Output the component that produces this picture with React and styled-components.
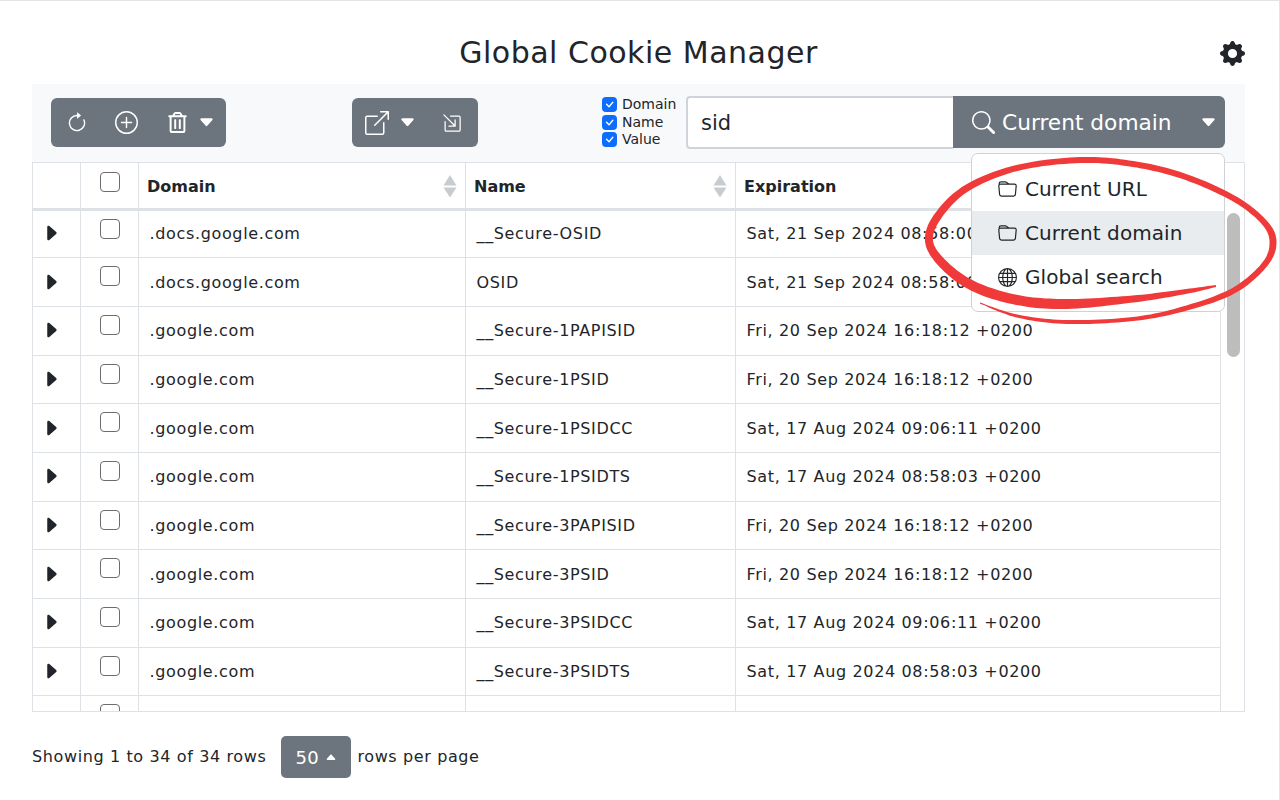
import React from "react";
import styled, { createGlobalStyle } from "styled-components";
import { BsArrowClockwise, BsPlusCircle, BsBoxArrowUpRight, BsBoxArrowInDownRight, BsGearFill, BsSearch, BsFolder, BsGlobe, BsCaretRightFill, BsCaretDownFill, BsCaretUpFill, BsCheck } from "react-icons/bs";
import { FaRegTrashAlt } from "react-icons/fa";

const Global = createGlobalStyle`
  html, body { margin: 0; padding: 0; background: #fff; }
  body { font-family: "DejaVu Sans", sans-serif; color: #212529; font-size: 16px; }
`;
const Page = styled.div`
  width: 1280px; height: 800px; box-sizing: border-box; padding: 0 34px 0 32px; position: relative; overflow: hidden;
  border-top: 1px solid #e4e4e4; border-right: 1px solid #e4e4e4;
`;
const Header = styled.header`
  height: 83px; display: grid; grid-template-columns: 1fr auto 1fr; align-items: center; padding-top: 20px; box-sizing: border-box;
`;
const Title = styled.h1`
  grid-column: 2; margin: 0; font-size: 30px; font-weight: 400; color: #212529; font-family: "DejaVu Sans", sans-serif; letter-spacing: 0.5px;
`;
const Gear = styled.span`
  justify-self: end; display: flex; font-size: 25px; color: #212529; margin-top: 2px;
`;
const Toolbar = styled.div`
  height: 78px; background: #f8f9fa; display: flex; align-items: flex-start; position: relative; box-sizing: border-box; padding-top: 14px; padding-left: 19px;
`;
const BtnGroup = styled.div`
  height: 49px; background: #6c757d; border-radius: 6px; color: #fff; display: flex; align-items: center; width: ${p => p.$w}px; margin-right: ${p => p.$mr}px; padding-left: ${p => p.$pl}px; box-sizing: border-box;
`;
const ToolIcon = styled.span`
  display: flex; font-size: ${p => p.$s || 22}px; width: ${p => p.$w}px;
`;
const Checks = styled.div`
  display: flex; flex-direction: column; width: 84px; margin-top: -2px; font-size: 14px; line-height: 17.6px;
`;
const CheckRow = styled.label`
  display: flex; align-items: center; gap: 5px; color: #212529;
`;
const BlueCheck = styled.span`
  width: 15px; height: 15px; border-radius: 4px; background: #0d6efd; color: #fff; display: flex; align-items: center; justify-content: center; font-size: 15px;
`;
const SearchInput = styled.div`
  width: 267px; height: 53px; margin-top: -2px; box-sizing: border-box; border: 2px solid #ced4da; border-right: 0; background: #fff; border-radius: 4px 0 0 4px; font-size: 21px; display: flex; align-items: center; padding-left: 13px; color: #212529;
`;
const SearchButton = styled.div`
  width: 272px; height: 52px; margin-top: -2px; background: #6c757d; color: #fff; border-radius: 0 6px 6px 0; display: flex; align-items: center; font-size: 21.7px; box-sizing: border-box; padding-left: 19px; gap: 7px; position: relative;
`;
const CaretEnd = styled.span`
  display: flex; font-size: 17px; margin-left: auto; margin-right: 8px;
`;
const Menu = styled.div`
  position: absolute; top: 69px; left: 939px; width: 254px; height: 159px; box-sizing: border-box; background: #fff; border: 1px solid #cfd2d5; border-radius: 7px; padding-top: 13px; z-index: 3;
`;
const MenuItem = styled.div`
  height: 44px; display: flex; align-items: center; gap: 8px; padding-left: 26px; font-size: 20px; letter-spacing: 0.08px; color: #212529; background: ${p => p.$active ? "#e9ecef" : "transparent"};
`;
const MenuIcon = styled.span`
  display: flex; font-size: 19px;
`;
const TableWrap = styled.div`
  height: 550px; border: 1px solid #dee2e6; box-sizing: border-box; overflow: hidden; position: relative;
`;
const Table = styled.table`
  width: 1188px; table-layout: fixed; border-collapse: collapse; font-size: 16px;
`;
const Th = styled.th`
  height: 46px; box-sizing: border-box; border-right: 1px solid #dee2e6; border-bottom: 3px solid #dee2e6; text-align: left; padding: 2px 8.5px 0; font-weight: 700; font-size: 16px; position: relative; width: ${p => p.$w ? p.$w + "px" : "auto"};
`;
const Td = styled.td`
  height: 48.7px; box-sizing: border-box; border-right: 1px solid #dee2e6; border-bottom: 1px solid #dee2e6; padding: 0 11px; white-space: nowrap; overflow: hidden; letter-spacing: 0.65px;
`;
const CheckCell = styled(Td)`
  padding: 0; vertical-align: top;
`;
const HeadCheckCell = styled(Th)`
  padding: 0; vertical-align: top;
`;
const Box = styled.span`
  display: block; width: 20px; height: 20px; box-sizing: border-box; border: 1px solid #6d6d6d; border-radius: 4px; margin: ${p => p.$top}px 0 0 19px;
`;
const Expander = styled.span`
  display: flex; justify-content: center; font-size: 20px; color: #212529; margin: -1px 3px 0 -8px;
`;
const SortMark = styled.svg`
  position: absolute; right: 8px; top: 12px; width: 14px; height: 23px; fill: #c9cccf;
`;
const Scrollbar = styled.div`
  position: absolute; right: 4px; top: 50px; width: 13px; height: 144px; background: #bdbdbd; border-radius: 7px;
`;
const Footer = styled.div`
  display: flex; align-items: center; margin-top: 24px; font-size: 16px; color: #212529; letter-spacing: 0.62px;
`;
const FooterText = styled.span`
  margin-bottom: 2px;
`;
const PageSize = styled.div`
  width: 70px; height: 42px; background: #6c757d; color: #fff; border-radius: 5px; margin: 0 6px 0 15px; display: flex; align-items: center; justify-content: center; gap: 6px; font-size: 18px; letter-spacing: 0.4px;
`;
const Small = styled.span`
  display: flex; font-size: 12px;
`;
const Scribble = styled.svg`
  position: absolute; left: 0; top: 0; width: 1280px; height: 800px; z-index: 5; pointer-events: none;
`;

const rows = [
  [".docs.google.com", "__Secure-OSID", "Sat, 21 Sep 2024 08:58:00 +0200"],
  [".docs.google.com", "OSID", "Sat, 21 Sep 2024 08:58:00 +0200"],
  [".google.com", "__Secure-1PAPISID", "Fri, 20 Sep 2024 16:18:12 +0200"],
  [".google.com", "__Secure-1PSID", "Fri, 20 Sep 2024 16:18:12 +0200"],
  [".google.com", "__Secure-1PSIDCC", "Sat, 17 Aug 2024 09:06:11 +0200"],
  [".google.com", "__Secure-1PSIDTS", "Sat, 17 Aug 2024 08:58:03 +0200"],
  [".google.com", "__Secure-3PAPISID", "Fri, 20 Sep 2024 16:18:12 +0200"],
  [".google.com", "__Secure-3PSID", "Fri, 20 Sep 2024 16:18:12 +0200"],
  [".google.com", "__Secure-3PSIDCC", "Sat, 17 Aug 2024 09:06:11 +0200"],
  [".google.com", "__Secure-3PSIDTS", "Sat, 17 Aug 2024 08:58:03 +0200"],
  ["", "", ""],
];

const Sort = () => (
  <SortMark viewBox="0 0 14 23">
    <polygon points="7,0 13.5,10.5 0.5,10.5" />
    <polygon points="7,22.5 13.5,12.5 0.5,12.5" />
  </SortMark>
);

// Pen stroke of varying width: [x, y, width] along the line.
const pen = [
  [1216,285,2],[1183,291,5],[1133,298,7],[1067,303,10],[1017,299,10],[973,285,10],[943,263,9],[929,240,8],
  [938,215,8],[967,187,7],[1017,167,6],[1080,159,6],[1133,163,6],[1183,175,6],[1233,197,6],[1263,220,6],
  [1273,240,7],[1265,263,6],[1233,290,6],[1183,308,5],[1133,318,4],[1067,321,4],[1017,315,3],[980,302,1],
];
function penPath(points) {
  const dense = [];
  for (let i = 0; i < points.length - 1; i++) {
    const a = points[Math.max(i - 1, 0)], b = points[i], c = points[i + 1], d = points[Math.min(i + 2, points.length - 1)];
    for (let k = 0; k < 12; k++) {
      const t = k / 12, t2 = t * t, t3 = t2 * t;
      dense.push([0, 1, 2].map(j => 0.5 * (2 * b[j] + (c[j] - a[j]) * t + (2 * a[j] - 5 * b[j] + 4 * c[j] - d[j]) * t2 + (3 * b[j] - a[j] - 3 * c[j] + d[j]) * t3)));
    }
  }
  dense.push(points[points.length - 1]);
  const left = [], right = [];
  dense.forEach((p, i) => {
    const q = dense[Math.min(i + 1, dense.length - 1)], o = dense[Math.max(i - 1, 0)];
    const dx = q[0] - o[0], dy = q[1] - o[1], len = Math.hypot(dx, dy) || 1;
    const nx = -dy / len * p[2] / 2, ny = dx / len * p[2] / 2;
    left.push(`${(p[0] + nx).toFixed(1)} ${(p[1] + ny).toFixed(1)}`);
    right.unshift(`${(p[0] - nx).toFixed(1)} ${(p[1] - ny).toFixed(1)}`);
  });
  return "M" + left.concat(right).join("L") + "Z";
}

export default function App() {
  return (
    <Page>
      <Global />
      <Header>
        <Title>Global Cookie Manager</Title>
        <Gear><BsGearFill /></Gear>
      </Header>
      <Toolbar>
        <BtnGroup $w={175} $mr={126} $pl={15}>
          <ToolIcon $w={49}><BsArrowClockwise /></ToolIcon>
          <ToolIcon $w={52} $s={23}><BsPlusCircle /></ToolIcon>
          <ToolIcon $w={31} $s={21}><FaRegTrashAlt /></ToolIcon>
          <ToolIcon $w={17} $s={17}><BsCaretDownFill /></ToolIcon>
        </BtnGroup>
        <BtnGroup $w={126} $mr={124} $pl={13}>
          <ToolIcon $w={34} $s={24}><BsBoxArrowUpRight /></ToolIcon>
          <ToolIcon $w={43} $s={17}><BsCaretDownFill /></ToolIcon>
          <ToolIcon $w={20} $s={20}><BsBoxArrowInDownRight /></ToolIcon>
        </BtnGroup>
        <Checks>
          {["Domain", "Name", "Value"].map(l => (
            <CheckRow key={l}><BlueCheck><BsCheck /></BlueCheck>{l}</CheckRow>
          ))}
        </Checks>
        <SearchInput>sid</SearchInput>
        <SearchButton>
          <BsSearch size={23} />Current domain
          <CaretEnd><BsCaretDownFill /></CaretEnd>
        </SearchButton>
        <Menu>
          <MenuItem><MenuIcon><BsFolder /></MenuIcon>Current URL</MenuItem>
          <MenuItem $active><MenuIcon><BsFolder /></MenuIcon>Current domain</MenuItem>
          <MenuItem><MenuIcon><BsGlobe /></MenuIcon>Global search</MenuItem>
        </Menu>
      </Toolbar>
      <TableWrap>
        <Table>
          <thead>
            <tr>
              <Th $w={47} />
              <HeadCheckCell $w={58}><Box $top={9} /></HeadCheckCell>
              <Th $w={327}>Domain<Sort /></Th>
              <Th $w={270}>Name<Sort /></Th>
              <Th>Expiration</Th>
            </tr>
          </thead>
          <tbody>
            {rows.map((r, i) => (
              <tr key={i}>
                <Td>{r[0] && <Expander><BsCaretRightFill /></Expander>}</Td>
                <CheckCell><Box $top={8} /></CheckCell>
                <Td>{r[0]}</Td>
                <Td>{r[1]}</Td>
                <Td>{r[2]}</Td>
              </tr>
            ))}
          </tbody>
        </Table>
        <Scrollbar />
      </TableWrap>
      <Footer>
        <FooterText>Showing 1 to 34 of 34 rows</FooterText>
        <PageSize>50 <Small><BsCaretUpFill /></Small></PageSize>
        <FooterText>rows per page</FooterText>
      </Footer>
      <Scribble viewBox="0 0 1280 800">
        <path d={penPath(pen)} fill="#f03a3a" />
      </Scribble>
    </Page>
  );
}
